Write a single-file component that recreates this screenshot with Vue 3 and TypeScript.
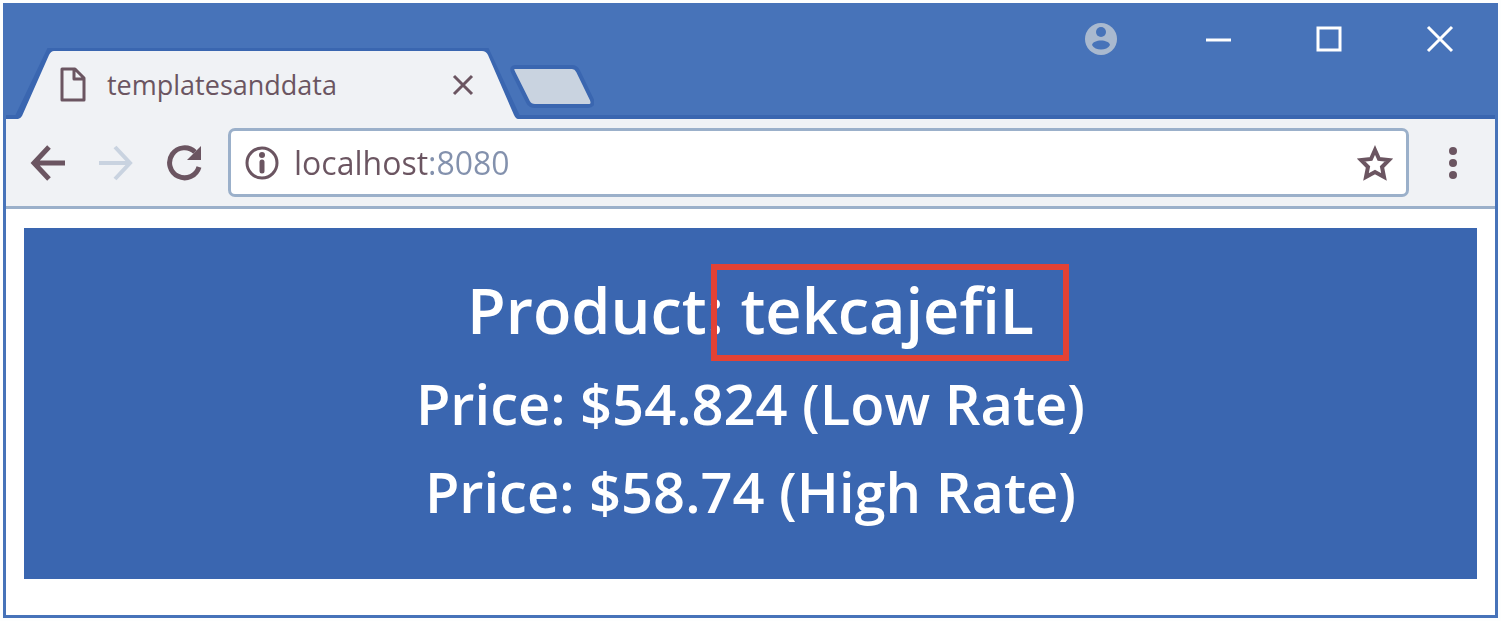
<script setup lang="ts">
import { ref } from 'vue'

interface Price {
  amount: string
  rate: string
}

const tabTitle = 'templatesanddata'
const address = ref('localhost:8080')
const productName = 'Lifejacket'
const prices: Price[] = [
  { amount: '$54.824', rate: 'Low Rate' },
  { amount: '$58.74', rate: 'High Rate' },
]

const reverse = (value: string): string => value.split('').reverse().join('')
</script>

<template>
  <div class="window">
    <header class="titlebar">
      <div class="tab">
        <svg class="tab-shape" viewBox="0 0 512 72" aria-hidden="true">
          <path d="M0 68H12L44 1H480L511 68" fill="none" stroke="#3a66b0" stroke-width="8" />
          <path d="M0 68H12Q14 68 16 65L43 4Q45 0 48 0H476Q480 0 482 4L508 64Q510 68 512 68V72H0Z" fill="#f0f2f5" />
        </svg>
        <svg class="page-icon" viewBox="0 0 26 36" aria-hidden="true">
          <path d="M2 2H15L24 11V33H2Z M14 2V12H24" fill="none" stroke="#6b5561" stroke-width="3" stroke-linejoin="round" />
        </svg>
        <span class="tab-title">{{ tabTitle }}</span>
        <button class="tab-close" type="button" aria-label="Close tab">
          <svg viewBox="0 0 22 22"><path d="M2 2L20 20M20 2L2 20" stroke="#6b5561" stroke-width="3" /></svg>
        </button>
      </div>
      <button class="new-tab" type="button" aria-label="New tab">
        <svg viewBox="0 0 88 48">
          <path d="M9 4H66Q70 4 72 8L86 37Q88 43 82 43H29Q24 43 22 39L7 9Q5 4 9 4Z" fill="#c9d3e0" stroke="#3a66b0" stroke-width="4" />
        </svg>
      </button>
      <div class="controls">
        <button type="button" aria-label="Profile">
          <svg viewBox="0 0 34 34">
            <circle cx="17" cy="17" r="16" fill="#a9b9cf" />
            <circle cx="17" cy="10" r="5" fill="#4773b9" />
            <path d="M8 23C9 17 25 17 26 23C23 29 11 29 8 23Z" fill="#4773b9" />
          </svg>
        </button>
        <button type="button" aria-label="Minimize">
          <svg viewBox="0 0 34 34"><path d="M9 18H34" stroke="#fff" stroke-width="3" /></svg>
        </button>
        <button type="button" aria-label="Maximize">
          <svg viewBox="0 0 34 34"><rect x="8" y="6" width="22" height="22" fill="none" stroke="#fff" stroke-width="3" /></svg>
        </button>
        <button type="button" aria-label="Close window">
          <svg viewBox="0 0 34 34"><path d="M5 5L29 29M29 5L5 29" stroke="#fff" stroke-width="3" /></svg>
        </button>
      </div>
    </header>

    <nav class="toolbar">
      <button class="tool" type="button" aria-label="Back">
        <svg viewBox="0 0 36 36"><path d="M35 18H4M19 2L4 18L19 34" fill="none" stroke="#6b5561" stroke-width="5" /></svg>
      </button>
      <button class="tool" type="button" aria-label="Forward">
        <svg viewBox="0 0 36 36"><path d="M1 18H32M17 2L32 18L17 34" fill="none" stroke="#c9d3e0" stroke-width="4" /></svg>
      </button>
      <button class="tool" type="button" aria-label="Reload">
        <svg viewBox="0 0 36 36">
          <path d="M33 22A15 15 0 1 1 29 7" fill="none" stroke="#6b5561" stroke-width="5" />
          <path d="M35 1V15H21Z" fill="#6b5561" />
        </svg>
      </button>
      <div class="omnibox">
        <button class="omni-button" type="button" aria-label="Site information">
          <svg viewBox="0 0 36 36">
            <circle cx="18" cy="18" r="15" fill="none" stroke="#6b5561" stroke-width="3" />
            <circle cx="18" cy="10" r="3" fill="#6b5561" />
            <path d="M18 17V26" stroke="#6b5561" stroke-width="5" stroke-linecap="round" />
          </svg>
        </button>
        <input v-model="address" class="address" type="text" aria-label="Address" spellcheck="false" />
        <button class="omni-button" type="button" aria-label="Bookmark this page">
          <svg viewBox="0 0 36 36">
            <path d="M18 5L22 14L32 15L25 22L27 32L18 27L9 32L11 22L4 15L14 14Z" fill="none" stroke="#6b5561" stroke-width="4" />
          </svg>
        </button>
      </div>
      <button class="menu" type="button" aria-label="Menu">
        <svg viewBox="0 0 12 36">
          <circle cx="6" cy="6" r="4" fill="#6b5561" />
          <circle cx="6" cy="18" r="4" fill="#6b5561" />
          <circle cx="6" cy="30" r="4" fill="#6b5561" />
        </svg>
      </button>
    </nav>

    <main class="page">
      <section class="product">
        <h1>Product: <span class="name">{{ reverse(productName) }}</span></h1>
        <h2 v-for="price in prices" :key="price.rate">Price: {{ price.amount }} ({{ price.rate }})</h2>
      </section>
    </main>
  </div>
</template>

<style>
body {
  background: #fdfefe;
}
</style>

<style scoped>
.window {
  margin: 3px;
  border: 3px solid #4773b9;
  border-top-width: 0;
  background: #fff;
  font-family: 'Open Sans', 'Noto Sans', sans-serif;
}

button {
  display: flex;
  align-items: center;
  justify-content: center;
  padding: 0;
  border: 0;
  background: none;
}

.titlebar {
  display: flex;
  align-items: flex-end;
  height: 116px;
  box-sizing: border-box;
  border-bottom: 4px solid #3a66b0;
  background: #4773b9;
}

.tab {
  position: relative;
  display: flex;
  align-items: center;
  width: 512px;
  height: 68px;
  margin-bottom: -4px;
  padding: 0 44px 0 54px;
  box-sizing: border-box;
}

.tab-shape {
  position: absolute;
  top: 0;
  left: 0;
  width: 512px;
  height: 72px;
  overflow: visible;
}

.page-icon,
.tab-title,
.tab-close {
  position: relative;
}

.page-icon {
  width: 26px;
  height: 36px;
}

.tab-title {
  flex: 1;
  margin-left: 21px;
  color: #6b5561;
  font-size: 27px;
  font-weight: 500;
  line-height: 36px;
}

.tab-close svg {
  width: 22px;
  height: 22px;
}

.new-tab svg {
  width: 88px;
  height: 48px;
}

.new-tab {
  margin-bottom: 4px;
  margin-left: -12px;
}

.controls {
  display: flex;
  gap: 79px;
  align-self: flex-start;
  margin: 19px 38px 0 auto;
}

.controls svg {
  width: 34px;
  height: 34px;
}

.toolbar {
  display: flex;
  align-items: center;
  height: 90px;
  box-sizing: border-box;
  padding: 0 36px 0 24px;
  border-bottom: 3px solid #9bb0ca;
  background: #f0f2f5;
}

.tool {
  margin-right: 32px;
}

.tool svg,
.omni-button svg {
  width: 36px;
  height: 36px;
}

.omnibox {
  display: flex;
  flex: 1;
  align-items: center;
  height: 69px;
  box-sizing: border-box;
  margin-left: -6px;
  padding: 0 13px;
  border: 3px solid #9bb0ca;
  border-radius: 7px;
  background: #fff;
}

.address {
  flex: 1;
  min-width: 0;
  margin-left: 14px;
  padding: 0;
  border: 0;
  outline: 0;
  background: linear-gradient(90deg, #6b5561 134px, #8391ad 134px);
  background-clip: text;
  color: #6b5561;
  font: 32px/44px 'Open Sans', 'Noto Sans', sans-serif;
  -webkit-text-fill-color: transparent;
}

.menu {
  margin-left: 38px;
}

.menu svg {
  width: 12px;
  height: 36px;
}

.page {
  padding: 19px 18px 36px;
}

.product {
  padding: 33px 0 44px;
  background: #3a66b0;
  color: #fff;
  text-align: center;
}

h1,
h2 {
  margin: 0;
  font-weight: 600;
}

h1 {
  font-size: 63px;
  line-height: 98px;
}

h2 {
  font-size: 56px;
  line-height: 88px;
}

.name {
  position: relative;
}

.name::after {
  position: absolute;
  inset: -3px -35px -9px -29px;
  border: 6px solid #e34234;
  content: '';
}
</style>
